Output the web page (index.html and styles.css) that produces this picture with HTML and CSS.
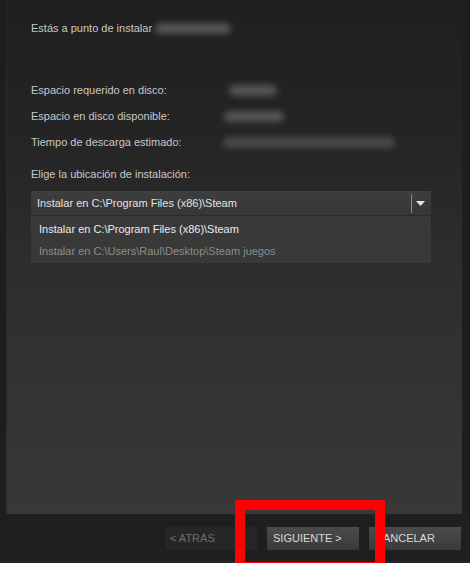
FILE: index.html
```html
<!DOCTYPE html>
<html lang="es">
<head>
<meta charset="utf-8">
<title>Instalar</title>
<link rel="stylesheet" href="styles.css">
</head>
<body>
<div class="window">
  <div class="panel">
    <div class="intro">Estás a punto de instalar <span class="blur blur-title"></span></div>
    <div class="info">
      <div class="label">Espacio requerido en disco:</div><div><span class="blur b1"></span></div>
      <div class="label">Espacio en disco disponible:</div><div><span class="blur b2"></span></div>
      <div class="label">Tiempo de descarga estimado:</div><div><span class="blur b3"></span></div>
    </div>
    <div class="choose">Elige la ubicación de instalación:</div>
    <div class="select">
      <span class="select-text">Instalar en C:\Program Files (x86)\Steam</span>
      <span class="select-sep"></span>
      <span class="select-arrow"><svg width="9" height="5" viewBox="0 0 9 5"><path d="M0 0H9L4.5 5Z" fill="#e8e8e8"/></svg></span>
    </div>
    <div class="options">
      <div class="opt opt-active">Instalar en C:\Program Files (x86)\Steam</div>
      <div class="opt">Instalar en C:\Users\Raul\Desktop\Steam juegos</div>
    </div>
  </div>
  <div class="footer">
    <div class="btn btn-disabled">&lt; ATRÁS</div>
    <div class="btn">SIGUIENTE &gt;</div>
    <div class="btn">CANCELAR</div>
  </div>
  <div class="highlight"></div>
</div>
</body>
</html>
```

FILE: styles.css
```css
html, body {
  margin: 0;
  padding: 0;
  background: #1e1e1e;
}
body {
  font-family: "Liberation Sans", Arial, sans-serif;
  font-size: 11px;
  color: #c8c8c8;
  width: 470px;
  height: 563px;
  overflow: hidden;
}
.window {
  position: relative;
  width: 470px;
  height: 563px;
  display: flex;
  flex-direction: column;
}
.panel {
  margin-left: 6px;
  width: 456px;
  height: 514px;
  box-sizing: border-box;
  padding: 21px 0 0 24px;
  background: linear-gradient(#1f1f1f 0%, #242424 25%, #2d2d2d 50%, #333333 75%, #383838 100%);
  border-left: 1px solid #2a2a2a;
}
.intro {
  line-height: 14px;
  height: 14px;
  display: flex;
  align-items: center;
}
.blur {
  display: inline-block;
  height: 11px;
  background: #555555;
  border-radius: 6px;
  filter: blur(3px);
}
.blur-title {
  width: 76px;
  margin-left: 3px;
}
.info {
  margin-top: 42px;
  display: grid;
  grid-template-columns: 196px auto;
  line-height: 26px;
}
.info > div {
  height: 26px;
  display: flex;
  align-items: center;
}
.b1 { width: 48px; margin-left: 2px; }
.b2 { width: 60px; margin-left: -3px; }
.b3 { width: 172px; margin-left: -4px; background: #4a4a4a; }
.choose {
  margin-top: 12px;
  line-height: 14px;
  height: 14px;
}
.select {
  margin-top: 10px;
  width: 400px;
  height: 25px;
  box-sizing: border-box;
  background: linear-gradient(#3e3e3e, #363636);
  border-bottom: 1px solid #2a2a2a;
  display: flex;
  align-items: center;
  padding-left: 6px;
  color: #e2e2e2;
  font-size: 11px;
}
.select-text {
  flex: 1;
}
.select-sep {
  width: 1px;
  height: 19px;
  background: #8a8a8a;
  margin-right: 4px;
}
.select-arrow {
  width: 9px;
  margin-right: 6px;
  display: flex;
  align-items: center;
}
.options {
  width: 400px;
  height: 47px;
  box-sizing: border-box;
  background: #393939;
  padding-top: 5px;
}
.opt {
  height: 22px;
  line-height: 16px;
  padding-left: 8px;
  color: #8c8c8c;
  font-size: 11px;
}
.opt-active {
  color: #ececec;
}
.footer {
  flex: 1;
  background: #1f1f1f;
  border-bottom: 2px solid #1c2a2e;
  display: flex;
  justify-content: flex-end;
  align-items: flex-start;
  gap: 10px;
  padding: 13px 9px 0 0;
}
.btn {
  width: 92px;
  height: 23px;
  box-sizing: border-box;
  padding-left: 6px;
  line-height: 23px;
  background: linear-gradient(#4b4b4b, #3a3a3a);
  color: #dadada;
  font-size: 11px;
}
.btn-disabled {
  background: #262626;
  color: #6e6e6e;
  padding-left: 5px;
}
.highlight {
  position: absolute;
  left: 235px;
  top: 500px;
  width: 150px;
  height: 72px;
  box-sizing: border-box;
  border: 10px solid #ff0000;
}
```
